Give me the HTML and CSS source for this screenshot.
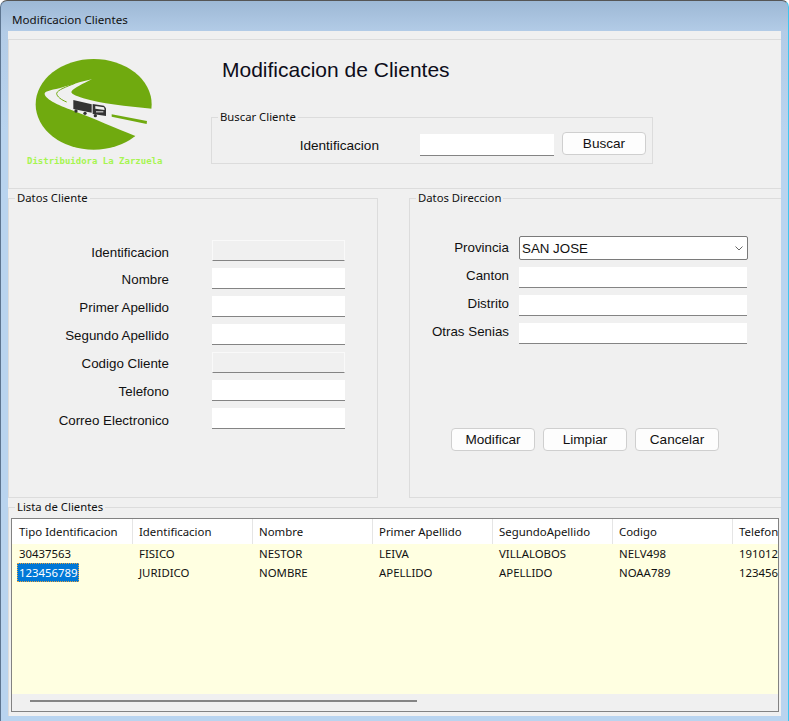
FILE: index.html
```html
<!DOCTYPE html>
<html>

<head>
    <link rel="stylesheet" href="styles.css">
</head>

<body>
    <div class="window">
        <div class="titlebar">Modificacion Clientes</div>

        <div class="content">
            <!-- Logo + search -->
            <div class="top-panel">
                <div class="logo">
                    <svg width="150" height="104" viewBox="0 0 450 312" xmlns="http://www.w3.org/2000/svg">
                        <ellipse cx="221" cy="163" rx="174" ry="136" fill="#70aa0f" />
                        <path fill="#f0f0f0" d="M216 88 C180 96 150 105 128 112 C100 120 78 122 74 130 C72 145 110 165 160 182 C220 205 290 235 346 258 L400 250 L396 176 C320 170 240 160 190 145 C165 137 150 130 155 124 C160 115 190 100 216 88 Z" />
                        <path fill="none" stroke="#70aa0f" stroke-width="3" d="M165 100 C140 110 112 120 110 130 C110 140 125 150 140 156" />
                        <polygon fill="#70aa0f" points="275,193 381,213 380,222 275,200" />
                        <polygon fill="#333" points="160,150 215,163 215,188 160,177" />
                        <polygon fill="#333" points="218,162 252,167 258,175 258,198 218,192" />
                        <polygon fill="#f0f0f0" points="226,168 252,172 254,180 226,176" />
                        <rect x="228" y="184" width="22" height="3" fill="#f0f0f0" />
                        <circle cx="168" cy="183" r="5" fill="#333" />
                        <circle cx="195" cy="190" r="5" fill="#333" />
                        <circle cx="226" cy="197" r="5" fill="#333" />
                    </svg>
                    <span class="logo-name">Distribuidora La Zarzuela</span>
                </div>
                <div class="search-col">
                    <h1>Modificacion de Clientes</h1>
                    <fieldset class="group search-group">
                        <legend>Buscar Cliente</legend>
                        <label>Identificacion</label>
                        <input type="text">
                        <button>Buscar</button>
                    </fieldset>
                </div>
            </div>

            <div class="form-row">
                <fieldset class="group client-group">
                    <legend>Datos Cliente</legend>
                    <div class="fields client-fields">
                        <label class="low">Identificacion</label><input type="text" class="locked" readonly>
                        <label>Nombre</label><input type="text">
                        <label>Primer Apellido</label><input type="text">
                        <label>Segundo Apellido</label><input type="text">
                        <label>Codigo Cliente</label><input type="text" class="locked" readonly>
                        <label>Telefono</label><input type="text">
                        <label class="low">Correo Electronico</label><input type="text">
                    </div>
                </fieldset>

                <fieldset class="group address-group">
                    <legend>Datos Direccion</legend>
                    <div class="fields address-fields">
                        <label>Provincia</label>
                        <div class="combo">
                            <span>SAN JOSE</span>
                            <svg width="8" height="5" viewBox="0 0 8 5" xmlns="http://www.w3.org/2000/svg">
                                <path d="M0.5 0.5 L4 4 L7.5 0.5" fill="none" stroke="#666" />
                            </svg>
                        </div>
                        <label>Canton</label><input type="text">
                        <label>Distrito</label><input type="text">
                        <label>Otras Senias</label><input type="text">
                    </div>
                    <div class="actions">
                        <button>Modificar</button>
                        <button>Limpiar</button>
                        <button>Cancelar</button>
                    </div>
                </fieldset>
            </div>

            <fieldset class="group list-group">
                <legend>Lista de Clientes</legend>
                <div class="grid">
                    <div class="grid-body">
                        <table>
                            <thead>
                                <tr>
                                    <th>Tipo Identificacion</th>
                                    <th>Identificacion</th>
                                    <th>Nombre</th>
                                    <th>Primer Apellido</th>
                                    <th>SegundoApellido</th>
                                    <th>Codigo</th>
                                    <th>Telefono</th>
                                </tr>
                            </thead>
                            <tbody>
                                <tr>
                                    <td>30437563</td>
                                    <td>FISICO</td>
                                    <td>NESTOR</td>
                                    <td>LEIVA</td>
                                    <td>VILLALOBOS</td>
                                    <td>NELV498</td>
                                    <td>19101285</td>
                                </tr>
                                <tr>
                                    <td><span class="selected">123456789</span></td>
                                    <td>JURIDICO</td>
                                    <td>NOMBRE</td>
                                    <td>APELLIDO</td>
                                    <td>APELLIDO</td>
                                    <td>NOAA789</td>
                                    <td>12345678</td>
                                </tr>
                            </tbody>
                        </table>
                    </div>
                    <div class="scrollbar">
                        <div class="thumb"></div>
                    </div>
                </div>
            </fieldset>
        </div>
    </div>
</body>

</html>
```
FILE: styles.css
```css
* {
    margin: 0;
    box-sizing: border-box;
}

html,
body {
    height: 100%;
    overflow: hidden;
    background: #fff;
}

body {
    font-family: "Liberation Sans", Arial, sans-serif;
    font-size: 13.33px;
    color: #111;
}

.window {
    width: 789px;
    height: 721px;
    padding: 0 7px 5px 7px;
    display: flex;
    flex-direction: column;
    border-top: 1px solid #555;
    border-left: 1px solid #5d7590;
    border-right: 1px solid #3fc6ee;
    border-radius: 7px 7px 0 0;
    background: linear-gradient(#9db8d5, #b3cce7 31px, #b9d4ef 130px);
}

.titlebar {
    height: 30px;
    flex: none;
    padding: 11px 0 0 4px;
    font-family: "Noto Sans", sans-serif;
    font-size: 11.6px;
    line-height: 16px;
}

.content {
    flex: 1;
    padding-top: 8px;
    background: #f0f0f0;
}

/* Group boxes */
.group {
    padding: 0;
    min-width: 0;
    border: 1px solid #dcdcdc;
}

.group legend {
    margin-left: 6px;
    padding: 0 2px;
    font-family: "Noto Sans", sans-serif;
    font-size: 11.3px;
    line-height: 14px;
}

/* Top panel */
.top-panel {
    height: 150px;
    display: flex;
    border: 1px solid #dcdcdc;
    border-right: 0;
}

.logo {
    width: 202px;
    padding-top: 10px;
}

.logo svg {
    display: block;
    margin-left: 11px;
}

.logo-name {
    display: block;
    margin: 1px 0 0 18px;
    font-family: "DejaVu Sans Mono", monospace;
    font-size: 9px;
    font-weight: bold;
    line-height: 12px;
    color: #a6f550;
    white-space: nowrap;
}

.search-col {
    flex: 1;
}

h1 {
    margin: 17px 0 0 11px;
    font-size: 21px;
    font-weight: normal;
    line-height: 26px;
    color: #0d0d1a;
}

.search-group {
    width: 442px;
    height: 54px;
    margin-top: 27px;
    display: flex;
    align-items: flex-start;
}

.search-group label {
    width: 167px;
    margin-top: 14px;
    text-align: right;
    font-size: 13.6px;
}

.search-group input {
    width: 134px;
    height: 22px;
    margin: 10px 0 0 41px;
}

.search-group button {
    margin: 8px 0 0 8px;
}

/* Form */
.form-row {
    height: 307px;
    margin-top: 2px;
    display: flex;
    justify-content: space-between;
}

.client-group {
    width: 370px;
}

.address-group {
    width: 372px;
    border-right: 0;
}

.fields {
    display: grid;
    align-items: center;
    justify-items: end;
}

.client-fields {
    grid-template-columns: 160px 133px;
    column-gap: 43px;
    row-gap: 7px;
    grid-auto-rows: 21px;
    padding-top: 35px;
}

.address-fields {
    grid-template-columns: 99px 228px;
    column-gap: 10px;
    grid-auto-rows: 21px;
    row-gap: 7px;
    padding-top: 34px;
}

.fields label {
    padding-top: 1px;
    white-space: nowrap;
}

.fields label.low {
    padding-top: 4px;
}

.address-fields label {
    padding: 0 0 4px;
}

.fields input {
    width: 100%;
}

input {
    display: block;
    height: 21px;
    padding: 0 3px;
    font: inherit;
    background: #fff;
    border: 0;
    border-bottom: 1px solid #848484;
    outline: 0;
}

input.locked {
    background: #f0f0f0;
    border: 1px solid #f9f9f9;
    border-bottom: 1px solid #848484;
}

.combo {
    width: calc(100% + 1px);
    height: 24px;
    margin: 0 -1px 3px 0;
    padding: 0 4px 0 2px;
    display: flex;
    align-items: center;
    justify-content: space-between;
    background: #fff;
    border: 1px solid #7a7a7a;
    border-radius: 2px;
}

button {
    width: 84px;
    height: 23px;
    padding: 0;
    font-family: inherit;
    font-size: 13.6px;
    color: #111;
    background: #fdfdfd;
    border: 1px solid #cfcfcf;
    border-radius: 4px;
}

.actions {
    margin: 84px 0 0 41px;
    display: flex;
    gap: 8px;
}

/* List */
.list-group {
    height: 216px;
    margin-top: 2px;
    padding: 4px 2px 0 2px;
    border-right: 0;
    border-bottom: 0;
}

.list-group legend {
    margin-left: 4px;
}

.grid {
    height: 194px;
    display: flex;
    flex-direction: column;
    border: 1px solid #828282;
}

.grid-body {
    flex: 1;
    overflow: hidden;
    background: #ffffe1;
}

table {
    width: 841px;
    table-layout: fixed;
    border-spacing: 0;
    font-family: "Noto Sans", sans-serif;
    font-size: 11.4px;
}

th {
    height: 25px;
    padding: 0 0 0 6px;
    text-align: left;
    font-weight: normal;
    background: #fff;
    border-right: 1px solid #e5e5e5;
    white-space: nowrap;
}

th:first-child {
    width: 121px;
}

td {
    height: 19px;
    padding: 0 0 0 6px;
    white-space: nowrap;
}

th:first-child,
td:first-child {
    padding-left: 7px;
}

.selected {
    display: block;
    width: 62px;
    margin-left: -2px;
    padding: 0 2px;
    line-height: 19px;
    color: #fff;
    background: #0078d7;
    outline: 1px dotted #e8a33d;
    outline-offset: -1px;
}

.scrollbar {
    height: 17px;
    flex: none;
    padding: 6px 0 0 18px;
    background: #f0f0f0;
}

.thumb {
    width: 387px;
    height: 2px;
    background: #858585;
}
```
